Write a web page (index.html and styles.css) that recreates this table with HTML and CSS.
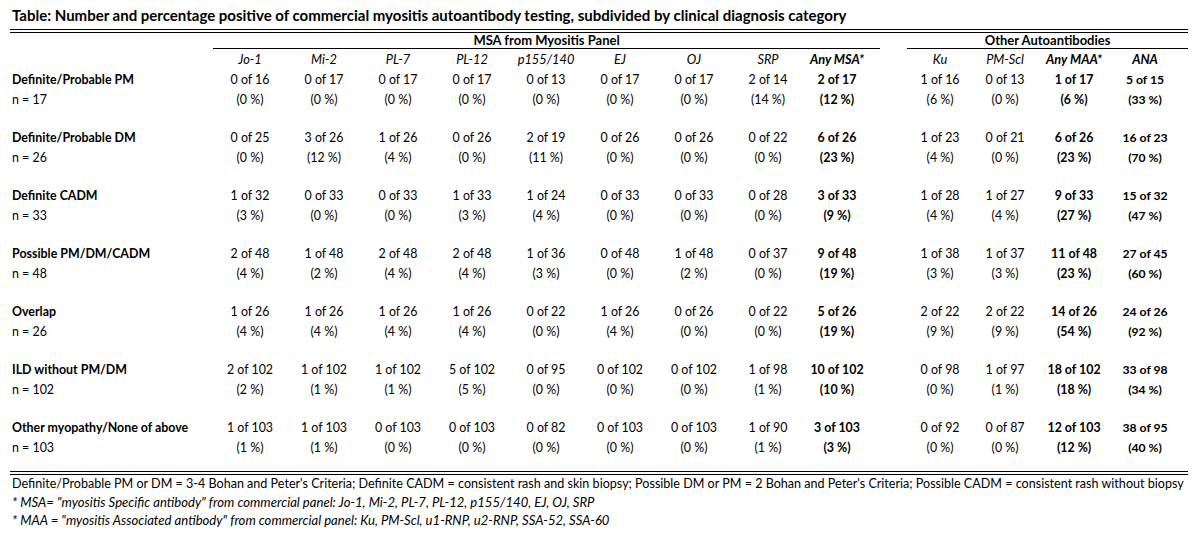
FILE: index.html
```html
<!DOCTYPE html>
<html lang="en">
<head>
<meta charset="utf-8">
<title>Myositis autoantibody table</title>
<link rel="stylesheet" href="styles.css">
</head>
<body>
<div class="page">
  <h1 class="title">Table: Number and percentage positive of commercial myositis autoantibody testing, subdivided by clinical diagnosis category</h1>
  <table class="data">
    <colgroup>
      <col class="c-label">
      <col class="c-msa"><col class="c-msa"><col class="c-msa"><col class="c-msa">
      <col class="c-msa"><col class="c-msa"><col class="c-msa"><col class="c-msa">
      <col class="c-anymsa">
      <col class="c-spacer">
      <col class="c-gap">
      <col class="c-ku"><col class="c-pmscl"><col class="c-maa"><col class="c-ana">
      <col class="c-trail">
    </colgroup>
    <thead>
      <tr class="group-row">
        <th></th>
        <th colspan="10" class="group">MSA from Myositis Panel</th>
        <th></th>
        <th colspan="5" class="group">Other Autoantibodies</th>
      </tr>
      <tr class="head-row">
        <th></th>
        <th>Jo-1</th><th>Mi-2</th><th>PL-7</th><th>PL-12</th><th>p155/140</th><th>EJ</th><th>OJ</th><th>SRP</th>
        <th class="strong">Any MSA*</th>
        <th></th><th></th>
        <th>Ku</th><th>PM-Scl</th>
        <th class="strong">Any MAA*</th>
        <th class="strong ana">ANA</th>
        <th></th>
      </tr>
    </thead>
    <tbody>
      <tr>
        <td class="label"><b>Definite/Probable PM</b><span>n = 17</span></td>
        <td>0 of 16<span>(0 %)</span></td><td>0 of 17<span>(0 %)</span></td><td>0 of 17<span>(0 %)</span></td><td>0 of 17<span>(0 %)</span></td><td>0 of 13<span>(0 %)</span></td><td>0 of 17<span>(0 %)</span></td><td>0 of 17<span>(0 %)</span></td><td>2 of 14<span>(14 %)</span></td>
        <td class="strong">2 of 17<span>(12 %)</span></td>
        <td></td><td></td>
        <td>1 of 16<span>(6 %)</span></td><td>0 of 13<span>(0 %)</span></td>
        <td class="strong">1 of 17<span>(6 %)</span></td><td class="strong ana">5 of 15<span>(33 %)</span></td>
        <td></td>
      </tr>
      <tr>
        <td class="label"><b>Definite/Probable DM</b><span>n = 26</span></td>
        <td>0 of 25<span>(0 %)</span></td><td>3 of 26<span>(12 %)</span></td><td>1 of 26<span>(4 %)</span></td><td>0 of 26<span>(0 %)</span></td><td>2 of 19<span>(11 %)</span></td><td>0 of 26<span>(0 %)</span></td><td>0 of 26<span>(0 %)</span></td><td>0 of 22<span>(0 %)</span></td>
        <td class="strong">6 of 26<span>(23 %)</span></td>
        <td></td><td></td>
        <td>1 of 23<span>(4 %)</span></td><td>0 of 21<span>(0 %)</span></td>
        <td class="strong">6 of 26<span>(23 %)</span></td><td class="strong ana">16 of 23<span>(70 %)</span></td>
        <td></td>
      </tr>
      <tr>
        <td class="label"><b>Definite CADM</b><span>n = 33</span></td>
        <td>1 of 32<span>(3 %)</span></td><td>0 of 33<span>(0 %)</span></td><td>0 of 33<span>(0 %)</span></td><td>1 of 33<span>(3 %)</span></td><td>1 of 24<span>(4 %)</span></td><td>0 of 33<span>(0 %)</span></td><td>0 of 33<span>(0 %)</span></td><td>0 of 28<span>(0 %)</span></td>
        <td class="strong">3 of 33<span>(9 %)</span></td>
        <td></td><td></td>
        <td>1 of 28<span>(4 %)</span></td><td>1 of 27<span>(4 %)</span></td>
        <td class="strong">9 of 33<span>(27 %)</span></td><td class="strong ana">15 of 32<span>(47 %)</span></td>
        <td></td>
      </tr>
      <tr>
        <td class="label"><b>Possible PM/DM/CADM</b><span>n = 48</span></td>
        <td>2 of 48<span>(4 %)</span></td><td>1 of 48<span>(2 %)</span></td><td>2 of 48<span>(4 %)</span></td><td>2 of 48<span>(4 %)</span></td><td>1 of 36<span>(3 %)</span></td><td>0 of 48<span>(0 %)</span></td><td>1 of 48<span>(2 %)</span></td><td>0 of 37<span>(0 %)</span></td>
        <td class="strong">9 of 48<span>(19 %)</span></td>
        <td></td><td></td>
        <td>1 of 38<span>(3 %)</span></td><td>1 of 37<span>(3 %)</span></td>
        <td class="strong">11 of 48<span>(23 %)</span></td><td class="strong ana">27 of 45<span>(60 %)</span></td>
        <td></td>
      </tr>
      <tr>
        <td class="label"><b>Overlap</b><span>n = 26</span></td>
        <td>1 of 26<span>(4 %)</span></td><td>1 of 26<span>(4 %)</span></td><td>1 of 26<span>(4 %)</span></td><td>1 of 26<span>(4 %)</span></td><td>0 of 22<span>(0 %)</span></td><td>1 of 26<span>(4 %)</span></td><td>0 of 26<span>(0 %)</span></td><td>0 of 22<span>(0 %)</span></td>
        <td class="strong">5 of 26<span>(19 %)</span></td>
        <td></td><td></td>
        <td>2 of 22<span>(9 %)</span></td><td>2 of 22<span>(9 %)</span></td>
        <td class="strong">14 of 26<span>(54 %)</span></td><td class="strong ana">24 of 26<span>(92 %)</span></td>
        <td></td>
      </tr>
      <tr>
        <td class="label"><b>ILD without PM/DM</b><span>n = 102</span></td>
        <td>2 of 102<span>(2 %)</span></td><td>1 of 102<span>(1 %)</span></td><td>1 of 102<span>(1 %)</span></td><td>5 of 102<span>(5 %)</span></td><td>0 of 95<span>(0 %)</span></td><td>0 of 102<span>(0 %)</span></td><td>0 of 102<span>(0 %)</span></td><td>1 of 98<span>(1 %)</span></td>
        <td class="strong">10 of 102<span>(10 %)</span></td>
        <td></td><td></td>
        <td>0 of 98<span>(0 %)</span></td><td>1 of 97<span>(1 %)</span></td>
        <td class="strong">18 of 102<span>(18 %)</span></td><td class="strong ana">33 of 98<span>(34 %)</span></td>
        <td></td>
      </tr>
      <tr class="last">
        <td class="label"><b>Other myopathy/None of above</b><span>n = 103</span></td>
        <td>1 of 103<span>(1 %)</span></td><td>1 of 103<span>(1 %)</span></td><td>0 of 103<span>(0 %)</span></td><td>0 of 103<span>(0 %)</span></td><td>0 of 82<span>(0 %)</span></td><td>0 of 103<span>(0 %)</span></td><td>0 of 103<span>(0 %)</span></td><td>1 of 90<span>(1 %)</span></td>
        <td class="strong">3 of 103<span>(3 %)</span></td>
        <td></td><td></td>
        <td>0 of 92<span>(0 %)</span></td><td>0 of 87<span>(0 %)</span></td>
        <td class="strong">12 of 103<span>(12 %)</span></td><td class="strong ana">38 of 95<span>(40 %)</span></td>
        <td></td>
      </tr>
    </tbody>
  </table>
  <div class="notes">
    <p>Definite/Probable PM or DM = 3-4 Bohan and Peter's Criteria; Definite CADM = consistent rash and skin biopsy; Possible DM or PM = 2 Bohan and Peter's Criteria; Possible CADM = consistent rash without biopsy</p>
    <p class="it">* MSA= "myositis Specific antibody" from commercial panel: Jo-1, Mi-2, PL-7, PL-12, p155/140, EJ, OJ, SRP</p>
    <p class="it">* MAA = "myositis Associated antibody" from commercial panel: Ku, PM-Scl, u1-RNP, u2-RNP, SSA-52, SSA-60</p>
  </div>
</div>
</body>
</html>
```

FILE: styles.css
```css
* { box-sizing: border-box; }
html, body {
  margin: 0;
  padding: 0;
  background: #ffffff;
}
body {
  font-family: Lato, "Open Sans", "Liberation Sans", sans-serif;
  color: #000000;
}
.page {
  width: 1178px;
  margin-left: 10px;
}
.title {
  margin: 0;
  padding: 5px 2px 4px;
  font-size: 15px;
  line-height: 20px;
  font-weight: 700;
  border-bottom: 4px double #000;
  white-space: nowrap;
}
.data {
  width: 1178px;
  table-layout: fixed;
  border-collapse: separate;
  border-spacing: 0;
  font-size: 12.4px;
}
.c-label { width: 203px; }
.c-msa { width: 74px; }
.c-anymsa { width: 64px; }
.c-spacer { width: 11px; }
.c-gap { width: 27px; }
.c-ku { width: 66px; }
.c-pmscl { width: 64px; }
.c-maa { width: 74px; }
.c-ana { width: 68px; }
.c-trail { width: 9px; }

.data th, .data td {
  padding: 0;
  text-align: center;
  vertical-align: top;
  white-space: nowrap;
}
.group-row th {
  height: 16px;
  line-height: 14px;
  font-size: 13px;
  font-weight: 700;
}
.group-row th.group {
  border-bottom: 1px solid #000;
}
.head-row th {
  line-height: 19.33px;
  padding: 1px 0 1px;
  font-size: 12.8px;
  font-style: italic;
  font-weight: 400;
}
.head-row th.strong { font-weight: 700; }
.data tbody td {
  line-height: 19.33px;
  padding-bottom: 19.33px;
}
.data tbody tr.last td {
  padding-bottom: 14px;
}
.data td span { display: block; }
.data td.strong { font-weight: 700; }
.data td.ana { font-size: 12.2px; }
.data td.label {
  text-align: left;
  padding-left: 2px;
}
.data td.label b { display: block; font-weight: 700; }
.notes {
  border-top: 4px double #000;
  padding-left: 2px;
  font-size: 12.57px;
  line-height: 18px;
}
.notes p {
  margin: 0;
  white-space: nowrap;
}
.notes .it {
  font-style: italic;
  font-size: 13.1px;
}
```
